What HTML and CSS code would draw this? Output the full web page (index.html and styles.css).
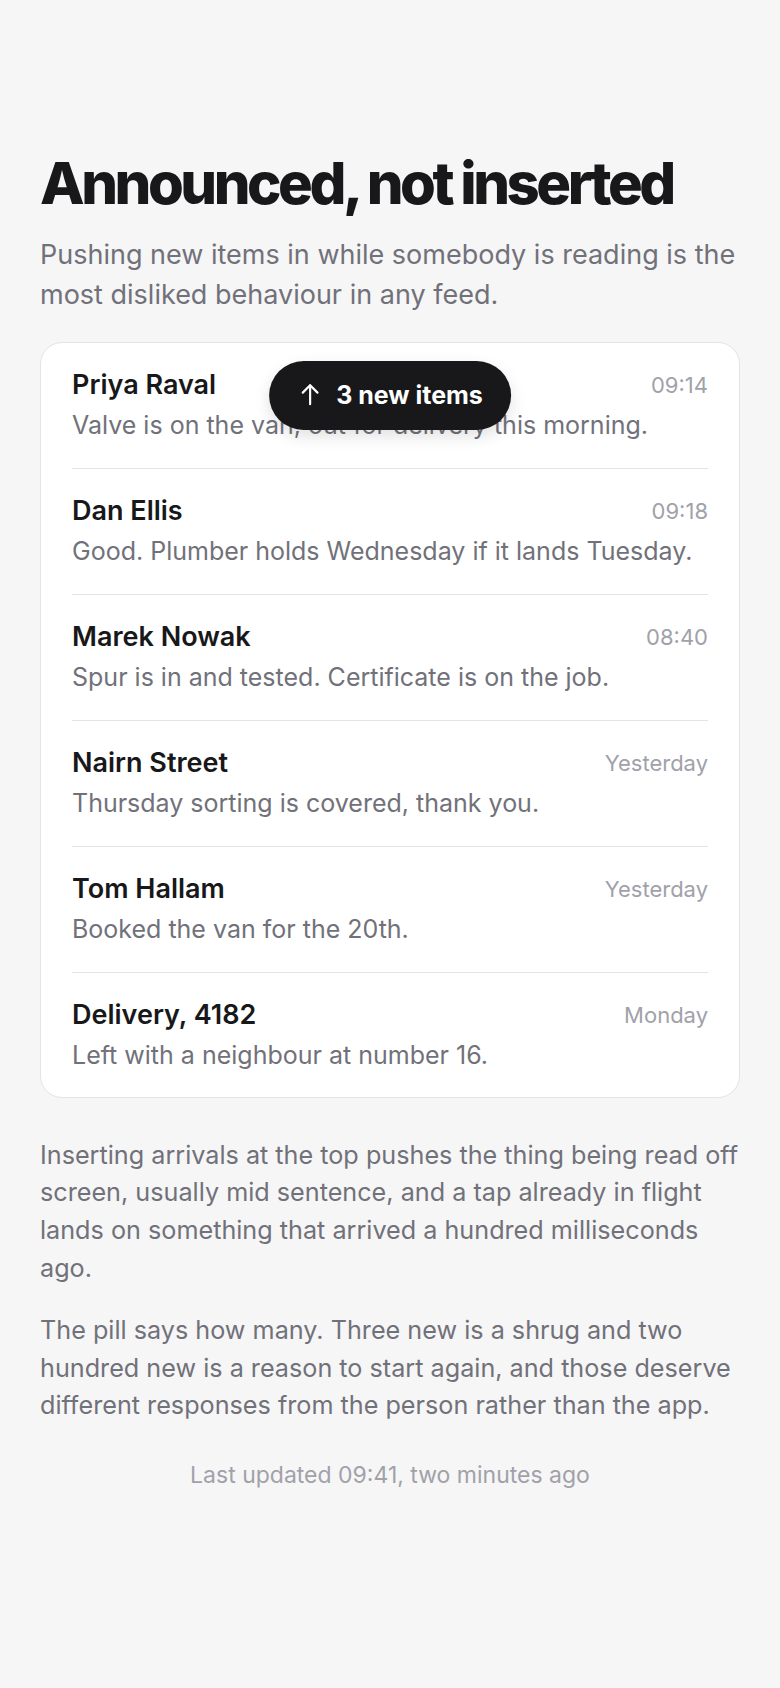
FILE: index.html
```html
<!DOCTYPE html>
<html lang="en">
<head>
    <meta charset="UTF-8">
    <meta name="viewport" content="width=device-width, initial-scale=1.0">
    <title>Announced, not inserted</title>
    <link rel="stylesheet" href="styles.css">
</head>
<body>
    <div class="page">
        <h1 class="title">Announced, not inserted</h1>
        <p class="lead">Pushing new items in while somebody is reading is the most disliked behaviour in any feed.</p>

        <div class="feed">
            <button class="pill">
                <svg class="pill-arrow" viewBox="0 0 24 24" fill="none" stroke="currentColor" stroke-width="2" stroke-linecap="round" stroke-linejoin="round"><path d="M12 20.5V3.2"/><path d="M5.2 9.8 12 3l6.8 6.8"/></svg>
                3 new items
            </button>
            <div class="row">
                <div class="row-top"><span class="name">Priya Raval</span><span class="time">09:14</span></div>
                <div class="msg">Valve is on the van, out for delivery this morning.</div>
            </div>
            <div class="row">
                <div class="row-top"><span class="name">Dan Ellis</span><span class="time">09:18</span></div>
                <div class="msg">Good. Plumber holds Wednesday if it lands Tuesday.</div>
            </div>
            <div class="row">
                <div class="row-top"><span class="name">Marek Nowak</span><span class="time">08:40</span></div>
                <div class="msg">Spur is in and tested. Certificate is on the job.</div>
            </div>
            <div class="row">
                <div class="row-top"><span class="name">Nairn Street</span><span class="time">Yesterday</span></div>
                <div class="msg">Thursday sorting is covered, thank you.</div>
            </div>
            <div class="row">
                <div class="row-top"><span class="name">Tom Hallam</span><span class="time">Yesterday</span></div>
                <div class="msg">Booked the van for the 20th.</div>
            </div>
            <div class="row">
                <div class="row-top"><span class="name">Delivery, 4182</span><span class="time">Monday</span></div>
                <div class="msg">Left with a neighbour at number 16.</div>
            </div>
        </div>

        <p class="body-text">Inserting arrivals at the top pushes the thing being read off screen, usually mid sentence, and a tap already in flight lands on something that arrived a hundred milliseconds ago.</p>
        <p class="body-text second">The pill says how many. Three new is a shrug and two hundred new is a reason to start again, and those deserve different responses from the person rather than the app.</p>

        <p class="updated">Last updated 09:41, two minutes ago</p>
    </div>
</body>
</html>
```
FILE: styles.css
```css
body{
    margin: 0;
    background: #f6f6f6;
    font-family: Inter, "Noto Sans", sans-serif;
    color: #18181b;
}

.page{
    padding: 152px 40px 80px;
}

.title{
    margin: 0;
    font-size: 58px;
    line-height: 1.1;
    font-weight: 800;
    letter-spacing: -0.06em;
    color: #18181b;
}

.lead{
    margin: 19px 0 27px;
    font-size: 27px;
    line-height: 40px;
    color: #71717a;
}

.feed{
    position: relative;
    background: #fff;
    border: 1px solid #e4e4e7;
    border-radius: 22px;
    padding: 0 31px;
}

.row{
    padding: 26px 0 25px;
    border-top: 1px solid #e4e4e7;
}
.row:first-of-type{
    border-top: none;
}
.row:last-child{
    padding-bottom: 24px;
}

.row-top{
    display: flex;
    justify-content: space-between;
    align-items: center;
}

.name{
    font-size: 27px;
    line-height: 32px;
    font-weight: 600;
    color: #18181b;
}

.time{
    font-size: 22px;
    color: #a1a1aa;
}

.msg{
    margin-top: 6px;
    font-size: 25px;
    line-height: 36px;
    color: #71717a;
}

.pill{
    position: absolute;
    top: 18px;
    left: 50%;
    transform: translateX(-50%);
    display: flex;
    align-items: center;
    gap: 13px;
    padding: 19px 28px;
    border: none;
    border-radius: 999px;
    background: #18181b;
    color: #fff;
    font-family: inherit;
    font-size: 25px;
    line-height: 31px;
    font-weight: 700;
    white-space: nowrap;
    box-shadow: 0 6px 16px rgba(0,0,0,0.12);
}

.pill-arrow{
    width: 26px;
    height: 26px;
}

.body-text{
    margin: 39px 0 0;
    font-size: 25.2px;
    line-height: 37.6px;
    color: #71717a;
}
.body-text.second{
    margin-top: 25px;
}

.updated{
    margin: 33px 0 0;
    text-align: center;
    font-size: 23px;
    line-height: 1.5;
    color: #a1a1aa;
}
```
